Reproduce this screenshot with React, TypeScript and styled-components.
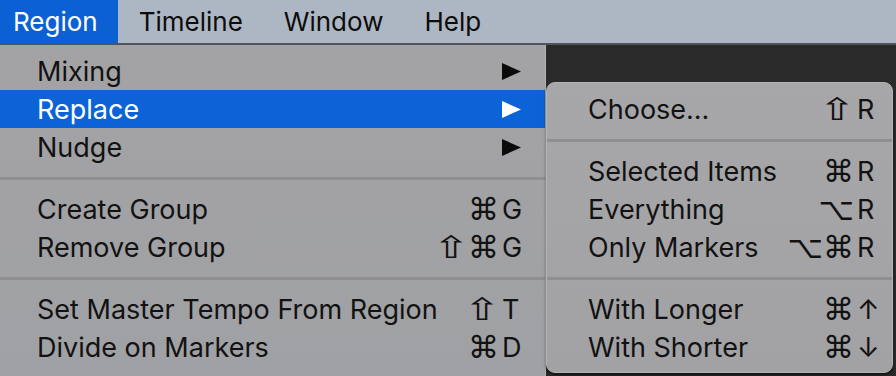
import React from 'react';
import styled, { createGlobalStyle } from 'styled-components';

const Global = createGlobalStyle`
  html, body { margin: 0; padding: 0; width: 896px; height: 376px; overflow: hidden; background: #2a2a2a; }
  body { font-family: "Inter", "DejaVu Sans", sans-serif; -webkit-font-smoothing: antialiased; }
`;

const Page = styled.div`
  display: flex;
  flex-direction: column;
  width: 896px;
  height: 376px;
  overflow: hidden;
`;

const MenuBar = styled.div`
  display: flex;
  height: 43px;
  flex-shrink: 0;
  background: #adb7c3;
  border-bottom: 2px solid #50545c;
`;

const BarItem = styled.div<{ $active?: boolean; $first?: boolean }>`
  display: flex;
  align-items: center;
  padding: 0 20px 0 ${p => (p.$first ? '13px' : '21px')};
  font-size: 26px;
  color: ${p => (p.$active ? '#ffffff' : '#0c0c0c')};
  background: ${p => (p.$active ? '#0b60d4' : 'transparent')};
`;

const Body = styled.div`
  display: flex;
  flex: 1;
  min-height: 0;
`;

const MainMenu = styled.div`
  width: 545px;
  flex-shrink: 0;
  padding-top: 7px;
  background: linear-gradient(180deg, #a3a3a6 0%, #a0a1a4 100%);
  border-right: 1px solid #b3b3b6;
`;

const SubArea = styled.div`
  flex: 1;
  padding-top: 37px;
`;

const SubMenu = styled.div`
  width: 347px;
  height: 291px;
  box-sizing: border-box;
  padding: 7px 0 7px;
  border-radius: 9px;
  border: 1px solid #b4b4b7;
  background: linear-gradient(180deg, #a7a7aa 0%, #a2a2a5 100%);
  box-shadow: 0 2px 3px rgba(0, 0, 0, 0.6);
  overflow: hidden;
`;

const Row = styled.div<{ $active?: boolean; $indent: number; $right: number }>`
  display: flex;
  align-items: center;
  height: 38px;
  padding: 0 ${p => p.$right}px 0 ${p => p.$indent}px;
  font-size: 27px;
  color: ${p => (p.$active ? '#ffffff' : '#121212')};
  background: ${p => (p.$active ? '#0b63d6' : 'transparent')};
  white-space: nowrap;
`;

const Label = styled.span`
  flex: 1;
`;

const Mods = styled.span`
  display: flex;
  align-items: center;
  font-family: "DejaVu Sans", sans-serif;
  font-size: 31px;
  line-height: 1;
`;

const ModGlyph = styled.span<{ $wide?: boolean }>`
  display: inline-block;
  transform: ${p => (p.$wide ? 'scaleX(1.45)' : 'none')};
  margin: 0 ${p => (p.$wide ? '4px' : '0')};
`;

const Key = styled.span<{ $w: number }>`
  width: ${p => p.$w}px;
  margin-left: 3px;
  display: flex;
  align-items: center;
`;

const Separator = styled.div`
  height: 24px;
  display: flex;
  align-items: center;
  &::after {
    content: '';
    flex: 1;
    height: 3px;
    background: #8f8f92;
  }
`;

const Arrow = ({ color }: { color: string }) => (
  <svg width="19" height="17" viewBox="0 0 19 17">
    <polygon points="0,0 19,8.5 0,17" fill={color} />
  </svg>
);

type Item =
  | { sep: true }
  | { sep?: false; label: string; mods?: string; k?: string; arrow?: boolean; active?: boolean };

const mainItems: Item[] = [
  { label: 'Mixing', arrow: true },
  { label: 'Replace', arrow: true, active: true },
  { label: 'Nudge', arrow: true },
  { sep: true },
  { label: 'Create Group', mods: '⌘', k: 'G' },
  { label: 'Remove Group', mods: '⇧⌘', k: 'G' },
  { sep: true },
  { label: 'Set Master Tempo From Region', mods: '⇧', k: 'T' },
  { label: 'Divide on Markers', mods: '⌘', k: 'D' },
];

const subItems: Item[] = [
  { label: 'Choose...', mods: '⇧', k: 'R' },
  { sep: true },
  { label: 'Selected Items', mods: '⌘', k: 'R' },
  { label: 'Everything', mods: '⌥', k: 'R' },
  { label: 'Only Markers', mods: '⌥⌘', k: 'R' },
  { sep: true },
  { label: 'With Longer', mods: '⌘', k: '↑' },
  { label: 'With Shorter', mods: '⌘', k: '↓' },
];

const MenuList = ({ items, indent, right, keyW }: { items: Item[]; indent: number; right: number; keyW: number }) => (
  <>
    {items.map((it, i) =>
      it.sep ? (
        <Separator key={i} />
      ) : (
        <Row key={i} $active={it.active} $indent={indent} $right={right}>
          <Label>{it.label}</Label>
          {it.mods && (
            <Mods>
              {Array.from(it.mods).map((c, j) => (
                <ModGlyph key={j} $wide={c === '⇧'}>{c}</ModGlyph>
              ))}
            </Mods>
          )}
          {(it.k || it.arrow) && (
            <Key $w={keyW}>{it.arrow ? <Arrow color={it.active ? '#ffffff' : '#0a0a0a'} /> : it.k}</Key>
          )}
        </Row>
      )
    )}
  </>
);

export default function App() {
  return (
    <>
      <Global />
      <Page>
        <MenuBar>
          <BarItem $active $first>Region</BarItem>
          <BarItem>Timeline</BarItem>
          <BarItem>Window</BarItem>
          <BarItem>Help</BarItem>
        </MenuBar>
        <Body>
          <MainMenu>
            <MenuList items={mainItems} indent={37} right={17} keyW={26} />
          </MainMenu>
          <SubArea>
            <SubMenu>
              <MenuList items={subItems} indent={41} right={17} keyW={18} />
            </SubMenu>
          </SubArea>
        </Body>
      </Page>
    </>
  );
}
